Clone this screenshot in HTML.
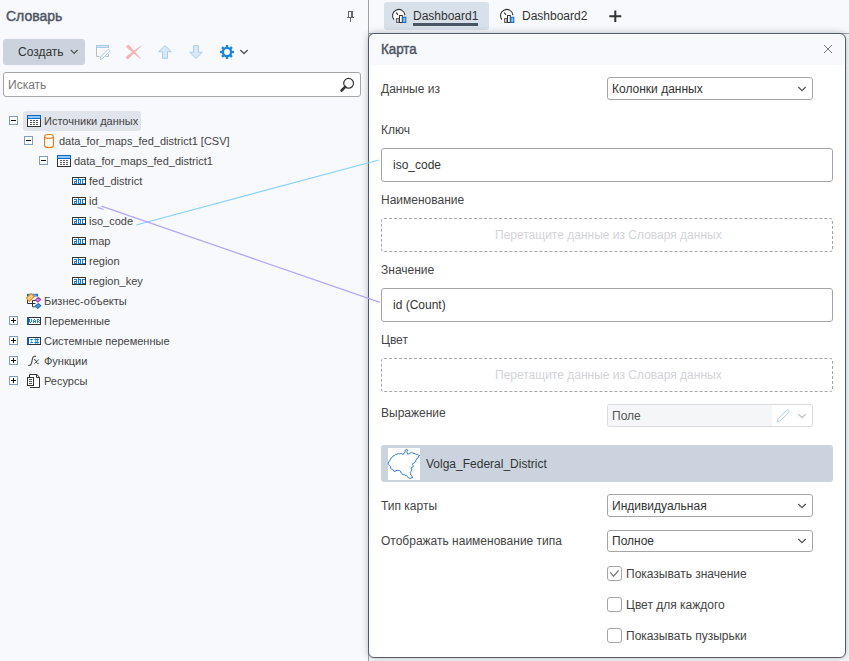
<!DOCTYPE html>
<html><head><meta charset="utf-8">
<style>
*{box-sizing:border-box;margin:0;padding:0}
html,body{width:849px;height:661px;overflow:hidden;background:#f8f9fc;font-family:"Liberation Sans",sans-serif;color:#444}
.t{position:absolute;white-space:nowrap;line-height:1;font-size:12px}
.s11{font-size:11px}
.b13{font-size:14px;font-weight:normal;-webkit-text-stroke:0.45px currentColor;transform:scaleX(0.955);transform-origin:0 0}
.abs{position:absolute}
svg{position:absolute;overflow:visible}
</style></head><body>

<!-- ===== LEFT PANEL ===== -->
<div class="t b13" style="left:6px;top:9px;color:#4e5563;transform:none">Словарь</div>

<!-- pin -->

<!-- Create button -->
<div class="abs" style="left:3px;top:39px;width:82px;height:26px;background:#cbd3de;border-radius:3px"></div>
<div class="t" style="left:18px;top:46px;color:#333">Создать</div>

<!-- search -->
<div class="abs" style="left:3px;top:72px;width:358px;height:25px;background:#fff;border:1px solid #a6a6a6;border-radius:3px"></div>
<div class="t" style="left:8px;top:79px;color:#777">Искать</div>

<!-- tree highlight -->
<div class="abs" style="left:23px;top:111px;width:118px;height:20px;background:#e1e4ea;border-radius:3px"></div>

<div class="t s11" style="left:44px;top:116px">Источники данных</div>
<div class="t s11" style="left:59px;top:136px">data_for_maps_fed_district1 [CSV]</div>
<div class="t s11" style="left:74px;top:156px">data_for_maps_fed_district1</div>
<div class="t s11" style="left:89px;top:176px">fed_district</div>
<div class="t s11" style="left:89px;top:196px">id</div>
<div class="t s11" style="left:89px;top:216px">iso_code</div>
<div class="t s11" style="left:89px;top:236px">map</div>
<div class="t s11" style="left:89px;top:256px">region</div>
<div class="t s11" style="left:89px;top:276px">region_key</div>
<div class="t s11" style="left:44px;top:296px">Бизнес-объекты</div>
<div class="t s11" style="left:44px;top:316px">Переменные</div>
<div class="t s11" style="left:44px;top:336px">Системные переменные</div>
<div class="t s11" style="left:44px;top:356px">Функции</div>
<div class="t s11" style="left:44px;top:376px">Ресурсы</div>

<!-- left panel border -->
<div class="abs" style="left:368px;top:0;width:1px;height:661px;background:#a0a0a0"></div>

<!-- ===== TABS ===== -->
<div class="abs" style="left:384px;top:2px;width:105px;height:28px;background:#d8e0ea;border-radius:3px"></div>
<div class="t" style="left:413px;top:10px;color:#333">Dashboard1</div>
<div class="abs" style="left:413px;top:23px;width:65px;height:3px;background:#4a5566"></div>
<div class="t" style="left:522px;top:10px;color:#333">Dashboard2</div>
<div class="abs" style="left:369px;top:33px;width:480px;height:1px;background:#a0a0a0"></div>

<!-- ===== PANEL ===== -->
<div class="abs" style="left:368px;top:33px;width:478px;height:625px;background:#fff;border:1px solid #4f5b6e;border-radius:6px;box-shadow:0 0 7px rgba(0,0,0,0.26);overflow:hidden">
  <div class="abs" style="left:1px;top:1px;width:474px;height:30px;background:#f8f9fc;border-radius:5px 5px 0 0"></div>
</div>

<div class="t b13" style="left:381px;top:42px;color:#4e5563">Карта</div>
<div class="t" style="left:381px;top:83px">Данные из</div>
<div class="abs" style="left:607px;top:77px;width:206px;height:23px;border:1px solid #a6a6a6;border-radius:3px;background:#fff"></div>
<div class="t" style="left:612px;top:83px;color:#333">Колонки данных</div>

<div class="t" style="left:381px;top:124px">Ключ</div>
<div class="abs" style="left:381px;top:148px;width:452px;height:34px;border:1px solid #a6a6a6;border-radius:3px;background:#fff"></div>
<div class="t" style="left:393px;top:159px;color:#333">iso_code</div>

<div class="t" style="left:381px;top:194px">Наименование</div>
<div class="abs" style="left:381px;top:218px;width:452px;height:34px;border:1px dashed #a6a6a6;border-radius:3px"></div>
<div class="t" style="left:495px;top:229px;color:#d3d3da">Перетащите данные из Словаря данных</div>

<div class="t" style="left:381px;top:264px">Значение</div>
<div class="abs" style="left:381px;top:288px;width:452px;height:34px;border:1px solid #a6a6a6;border-radius:3px;background:#fff"></div>
<div class="t" style="left:393px;top:299px;color:#333">id (Count)</div>

<div class="t" style="left:381px;top:334px">Цвет</div>
<div class="abs" style="left:381px;top:358px;width:452px;height:34px;border:1px dashed #a6a6a6;border-radius:3px"></div>
<div class="t" style="left:495px;top:369px;color:#d3d3da">Перетащите данные из Словаря данных</div>

<div class="t" style="left:381px;top:407px">Выражение</div>
<div class="abs" style="left:607px;top:404px;width:206px;height:23px;border:1px solid #dadada;border-radius:3px;background:#fff;overflow:hidden">
  <div class="abs" style="left:0;top:0;width:164px;height:21px;background:#f4f6f8"></div>
</div>
<div class="t" style="left:612px;top:410px;color:#555">Поле</div>

<div class="abs" style="left:381px;top:445px;width:452px;height:37px;background:#cbd3df;border-radius:3px"></div>
<div class="abs" style="left:388px;top:448px;width:32px;height:32px;background:#fff"></div>
<div class="t" style="left:426px;top:458px;color:#333">Volga_Federal_District</div>

<div class="t" style="left:381px;top:500px">Тип карты</div>
<div class="abs" style="left:607px;top:494px;width:206px;height:23px;border:1px solid #a6a6a6;border-radius:3px;background:#fff"></div>
<div class="t" style="left:612px;top:500px;color:#333">Индивидуальная</div>

<div class="t" style="left:381px;top:535px">Отображать наименование типа</div>
<div class="abs" style="left:607px;top:530px;width:206px;height:22px;border:1px solid #a6a6a6;border-radius:3px;background:#fff"></div>
<div class="t" style="left:612px;top:535px;color:#333">Полное</div>

<div class="abs" style="left:607px;top:566px;width:15px;height:15px;border:1px solid #a6a6a6;border-radius:3px;background:#fff"></div>
<div class="t" style="left:626px;top:568px">Показывать значение</div>
<div class="abs" style="left:607px;top:597px;width:15px;height:15px;border:1px solid #a6a6a6;border-radius:3px;background:#fff"></div>
<div class="t" style="left:626px;top:599px">Цвет для каждого</div>
<div class="abs" style="left:607px;top:628px;width:15px;height:15px;border:1px solid #a6a6a6;border-radius:3px;background:#fff"></div>
<div class="t" style="left:626px;top:630px">Показывать пузырьки</div>

<svg style="left:0;top:0" width="849" height="661"><g fill="#666"><rect x="348" y="11" width="1" height="6"/><rect x="348" y="11" width="5" height="1"/><rect x="351" y="11" width="2" height="6"/><rect x="347" y="17" width="7" height="1"/><rect x="350" y="18" width="1" height="4"/></g><path d="M70.8 50 L74.2 53.4 L77.6 50" fill="none" stroke="#555" stroke-width="1.3"/><path d="M96.5 48 V56.5 H99.5 M105.5 56.5 H108.5 V54" fill="none" stroke="#bcbcbc" stroke-width="1"/><rect x="96.5" y="45.5" width="12" height="2" fill="#d3e6f6" stroke="#a9cde9" stroke-width="1"/><path d="M100 59.3 L102.4 58.6 L109.45 51.45 A1.2 1.2 0 0 0 107.75 49.75 L100.7 56.9 Z" fill="#fff" stroke="#a9cde9" stroke-width="1"/><path d="M126.89 47.65 L140.22 58.79 L140.78 58.21 L129.11 45.35Z M128.47 58.64 L141.26 46.30 L140.74 45.70 L126.53 56.36Z" fill="#f5b3b7"/><circle cx="128" cy="46.5" r="1.6" fill="#f5b3b7"/><circle cx="127.5" cy="57.5" r="1.5" fill="#f5b3b7"/><path d="M165 45.5 L171.3 51.7 H167.5 V58.3 H162.5 V51.7 H158.7 Z" fill="#d9e8f7" stroke="#a9cde9" stroke-width="1"/><path d="M196 58.5 L202.3 52.3 H198.5 V45.7 H193.5 V52.3 H189.7 Z" fill="#d9e8f7" stroke="#a9cde9" stroke-width="1"/><g transform="translate(227 52)" fill="#1d84d6"><rect x="-1.2" y="-7" width="2.4" height="3" transform="rotate(0)"/><rect x="-1.2" y="-7" width="2.4" height="3" transform="rotate(45)"/><rect x="-1.2" y="-7" width="2.4" height="3" transform="rotate(90)"/><rect x="-1.2" y="-7" width="2.4" height="3" transform="rotate(135)"/><rect x="-1.2" y="-7" width="2.4" height="3" transform="rotate(180)"/><rect x="-1.2" y="-7" width="2.4" height="3" transform="rotate(225)"/><rect x="-1.2" y="-7" width="2.4" height="3" transform="rotate(270)"/><rect x="-1.2" y="-7" width="2.4" height="3" transform="rotate(315)"/><circle r="4.1" fill="none" stroke="#1d84d6" stroke-width="2.3"/></g><path d="M240.3 50 L244 53.6 L247.7 50" fill="none" stroke="#555" stroke-width="1.4"/><circle cx="348.6" cy="83.3" r="4.9" fill="none" stroke="#333" stroke-width="1.2"/><path d="M345.2 86.8 L341.6 90.5" stroke="#333" stroke-width="2.6" stroke-linecap="round"/><rect x="9.5" y="116.5" width="8" height="8" fill="#fff" stroke="#7e9fc2"/><rect x="11" y="120" width="5" height="1" fill="#111"/><rect x="24.5" y="136.5" width="8" height="8" fill="#fff" stroke="#7e9fc2"/><rect x="26" y="140" width="5" height="1" fill="#111"/><rect x="39.5" y="156.5" width="8" height="8" fill="#fff" stroke="#7e9fc2"/><rect x="41" y="160" width="5" height="1" fill="#111"/><rect x="9.5" y="316.5" width="8" height="8" fill="#fff" stroke="#7e9fc2"/><rect x="11" y="320" width="5" height="1" fill="#111"/><rect x="13" y="318" width="1" height="5" fill="#111"/><rect x="9.5" y="336.5" width="8" height="8" fill="#fff" stroke="#7e9fc2"/><rect x="11" y="340" width="5" height="1" fill="#111"/><rect x="13" y="338" width="1" height="5" fill="#111"/><rect x="9.5" y="356.5" width="8" height="8" fill="#fff" stroke="#7e9fc2"/><rect x="11" y="360" width="5" height="1" fill="#111"/><rect x="13" y="358" width="1" height="5" fill="#111"/><rect x="9.5" y="376.5" width="8" height="8" fill="#fff" stroke="#7e9fc2"/><rect x="11" y="380" width="5" height="1" fill="#111"/><rect x="13" y="378" width="1" height="5" fill="#111"/><g transform="translate(27 115)"><rect x="0.5" y="3.5" width="13" height="8" fill="#fff" stroke="#333" stroke-width="1"/><rect x="0" y="0" width="14" height="4" fill="#0a68c8"/><rect x="1" y="1" width="12" height="2" fill="#90c8f4"/><rect x="3" y="5" width="2" height="1" fill="#555"/><rect x="6" y="5" width="2" height="1" fill="#555"/><rect x="9" y="5" width="2" height="1" fill="#555"/><rect x="3" y="7" width="2" height="1" fill="#555"/><rect x="6" y="7" width="2" height="1" fill="#555"/><rect x="9" y="7" width="2" height="1" fill="#555"/><rect x="3" y="9" width="2" height="1" fill="#555"/><rect x="6" y="9" width="2" height="1" fill="#555"/><rect x="9" y="9" width="2" height="1" fill="#555"/></g><g fill="#fff" stroke="#e8730f" stroke-width="1.1"><path d="M44.6 136.5 V145.5 Q44.6 147.5 49 147.5 Q53.4 147.5 53.4 145.5 V136.5"/><ellipse cx="49" cy="136.4" rx="4.4" ry="1.9"/></g><g transform="translate(57 155)"><rect x="0.5" y="3.5" width="13" height="8" fill="#fff" stroke="#333" stroke-width="1"/><rect x="0" y="0" width="14" height="4" fill="#0a68c8"/><rect x="1" y="1" width="12" height="2" fill="#90c8f4"/><rect x="3" y="5" width="2" height="1" fill="#555"/><rect x="6" y="5" width="2" height="1" fill="#555"/><rect x="9" y="5" width="2" height="1" fill="#555"/><rect x="3" y="7" width="2" height="1" fill="#555"/><rect x="6" y="7" width="2" height="1" fill="#555"/><rect x="9" y="7" width="2" height="1" fill="#555"/><rect x="3" y="9" width="2" height="1" fill="#555"/><rect x="6" y="9" width="2" height="1" fill="#555"/><rect x="9" y="9" width="2" height="1" fill="#555"/></g><g transform="translate(72 177)"><rect x="0.5" y="0.5" width="13" height="7" fill="#fff" stroke="#333"/><g fill="#1a7fd0"><rect x="2" y="2" width="1" height="1"/><rect x="3" y="2" width="1" height="1"/><rect x="4" y="2" width="1" height="1"/><rect x="4" y="3" width="1" height="1"/><rect x="2" y="4" width="1" height="1"/><rect x="3" y="4" width="1" height="1"/><rect x="4" y="4" width="1" height="1"/><rect x="2" y="5" width="1" height="1"/><rect x="4" y="5" width="1" height="1"/><rect x="2" y="6" width="1" height="1"/><rect x="3" y="6" width="1" height="1"/><rect x="4" y="6" width="1" height="1"/><rect x="6" y="1" width="1" height="1"/><rect x="6" y="2" width="1" height="1"/><rect x="7" y="2" width="1" height="1"/><rect x="8" y="2" width="1" height="1"/><rect x="6" y="3" width="1" height="1"/><rect x="8" y="3" width="1" height="1"/><rect x="6" y="4" width="1" height="1"/><rect x="8" y="4" width="1" height="1"/><rect x="6" y="5" width="1" height="1"/><rect x="8" y="5" width="1" height="1"/><rect x="6" y="6" width="1" height="1"/><rect x="7" y="6" width="1" height="1"/><rect x="8" y="6" width="1" height="1"/><rect x="10" y="2" width="1" height="1"/><rect x="11" y="2" width="1" height="1"/><rect x="12" y="2" width="1" height="1"/><rect x="10" y="3" width="1" height="1"/><rect x="10" y="4" width="1" height="1"/><rect x="10" y="5" width="1" height="1"/><rect x="10" y="6" width="1" height="1"/><rect x="11" y="6" width="1" height="1"/><rect x="12" y="6" width="1" height="1"/></g></g><g transform="translate(72 197)"><rect x="0.5" y="0.5" width="13" height="7" fill="#fff" stroke="#333"/><g fill="#1a7fd0"><rect x="2" y="2" width="1" height="1"/><rect x="3" y="2" width="1" height="1"/><rect x="4" y="2" width="1" height="1"/><rect x="4" y="3" width="1" height="1"/><rect x="2" y="4" width="1" height="1"/><rect x="3" y="4" width="1" height="1"/><rect x="4" y="4" width="1" height="1"/><rect x="2" y="5" width="1" height="1"/><rect x="4" y="5" width="1" height="1"/><rect x="2" y="6" width="1" height="1"/><rect x="3" y="6" width="1" height="1"/><rect x="4" y="6" width="1" height="1"/><rect x="6" y="1" width="1" height="1"/><rect x="6" y="2" width="1" height="1"/><rect x="7" y="2" width="1" height="1"/><rect x="8" y="2" width="1" height="1"/><rect x="6" y="3" width="1" height="1"/><rect x="8" y="3" width="1" height="1"/><rect x="6" y="4" width="1" height="1"/><rect x="8" y="4" width="1" height="1"/><rect x="6" y="5" width="1" height="1"/><rect x="8" y="5" width="1" height="1"/><rect x="6" y="6" width="1" height="1"/><rect x="7" y="6" width="1" height="1"/><rect x="8" y="6" width="1" height="1"/><rect x="10" y="2" width="1" height="1"/><rect x="11" y="2" width="1" height="1"/><rect x="12" y="2" width="1" height="1"/><rect x="10" y="3" width="1" height="1"/><rect x="10" y="4" width="1" height="1"/><rect x="10" y="5" width="1" height="1"/><rect x="10" y="6" width="1" height="1"/><rect x="11" y="6" width="1" height="1"/><rect x="12" y="6" width="1" height="1"/></g></g><g transform="translate(72 217)"><rect x="0.5" y="0.5" width="13" height="7" fill="#fff" stroke="#333"/><g fill="#1a7fd0"><rect x="2" y="2" width="1" height="1"/><rect x="3" y="2" width="1" height="1"/><rect x="4" y="2" width="1" height="1"/><rect x="4" y="3" width="1" height="1"/><rect x="2" y="4" width="1" height="1"/><rect x="3" y="4" width="1" height="1"/><rect x="4" y="4" width="1" height="1"/><rect x="2" y="5" width="1" height="1"/><rect x="4" y="5" width="1" height="1"/><rect x="2" y="6" width="1" height="1"/><rect x="3" y="6" width="1" height="1"/><rect x="4" y="6" width="1" height="1"/><rect x="6" y="1" width="1" height="1"/><rect x="6" y="2" width="1" height="1"/><rect x="7" y="2" width="1" height="1"/><rect x="8" y="2" width="1" height="1"/><rect x="6" y="3" width="1" height="1"/><rect x="8" y="3" width="1" height="1"/><rect x="6" y="4" width="1" height="1"/><rect x="8" y="4" width="1" height="1"/><rect x="6" y="5" width="1" height="1"/><rect x="8" y="5" width="1" height="1"/><rect x="6" y="6" width="1" height="1"/><rect x="7" y="6" width="1" height="1"/><rect x="8" y="6" width="1" height="1"/><rect x="10" y="2" width="1" height="1"/><rect x="11" y="2" width="1" height="1"/><rect x="12" y="2" width="1" height="1"/><rect x="10" y="3" width="1" height="1"/><rect x="10" y="4" width="1" height="1"/><rect x="10" y="5" width="1" height="1"/><rect x="10" y="6" width="1" height="1"/><rect x="11" y="6" width="1" height="1"/><rect x="12" y="6" width="1" height="1"/></g></g><g transform="translate(72 237)"><rect x="0.5" y="0.5" width="13" height="7" fill="#fff" stroke="#333"/><g fill="#1a7fd0"><rect x="2" y="2" width="1" height="1"/><rect x="3" y="2" width="1" height="1"/><rect x="4" y="2" width="1" height="1"/><rect x="4" y="3" width="1" height="1"/><rect x="2" y="4" width="1" height="1"/><rect x="3" y="4" width="1" height="1"/><rect x="4" y="4" width="1" height="1"/><rect x="2" y="5" width="1" height="1"/><rect x="4" y="5" width="1" height="1"/><rect x="2" y="6" width="1" height="1"/><rect x="3" y="6" width="1" height="1"/><rect x="4" y="6" width="1" height="1"/><rect x="6" y="1" width="1" height="1"/><rect x="6" y="2" width="1" height="1"/><rect x="7" y="2" width="1" height="1"/><rect x="8" y="2" width="1" height="1"/><rect x="6" y="3" width="1" height="1"/><rect x="8" y="3" width="1" height="1"/><rect x="6" y="4" width="1" height="1"/><rect x="8" y="4" width="1" height="1"/><rect x="6" y="5" width="1" height="1"/><rect x="8" y="5" width="1" height="1"/><rect x="6" y="6" width="1" height="1"/><rect x="7" y="6" width="1" height="1"/><rect x="8" y="6" width="1" height="1"/><rect x="10" y="2" width="1" height="1"/><rect x="11" y="2" width="1" height="1"/><rect x="12" y="2" width="1" height="1"/><rect x="10" y="3" width="1" height="1"/><rect x="10" y="4" width="1" height="1"/><rect x="10" y="5" width="1" height="1"/><rect x="10" y="6" width="1" height="1"/><rect x="11" y="6" width="1" height="1"/><rect x="12" y="6" width="1" height="1"/></g></g><g transform="translate(72 257)"><rect x="0.5" y="0.5" width="13" height="7" fill="#fff" stroke="#333"/><g fill="#1a7fd0"><rect x="2" y="2" width="1" height="1"/><rect x="3" y="2" width="1" height="1"/><rect x="4" y="2" width="1" height="1"/><rect x="4" y="3" width="1" height="1"/><rect x="2" y="4" width="1" height="1"/><rect x="3" y="4" width="1" height="1"/><rect x="4" y="4" width="1" height="1"/><rect x="2" y="5" width="1" height="1"/><rect x="4" y="5" width="1" height="1"/><rect x="2" y="6" width="1" height="1"/><rect x="3" y="6" width="1" height="1"/><rect x="4" y="6" width="1" height="1"/><rect x="6" y="1" width="1" height="1"/><rect x="6" y="2" width="1" height="1"/><rect x="7" y="2" width="1" height="1"/><rect x="8" y="2" width="1" height="1"/><rect x="6" y="3" width="1" height="1"/><rect x="8" y="3" width="1" height="1"/><rect x="6" y="4" width="1" height="1"/><rect x="8" y="4" width="1" height="1"/><rect x="6" y="5" width="1" height="1"/><rect x="8" y="5" width="1" height="1"/><rect x="6" y="6" width="1" height="1"/><rect x="7" y="6" width="1" height="1"/><rect x="8" y="6" width="1" height="1"/><rect x="10" y="2" width="1" height="1"/><rect x="11" y="2" width="1" height="1"/><rect x="12" y="2" width="1" height="1"/><rect x="10" y="3" width="1" height="1"/><rect x="10" y="4" width="1" height="1"/><rect x="10" y="5" width="1" height="1"/><rect x="10" y="6" width="1" height="1"/><rect x="11" y="6" width="1" height="1"/><rect x="12" y="6" width="1" height="1"/></g></g><g transform="translate(72 277)"><rect x="0.5" y="0.5" width="13" height="7" fill="#fff" stroke="#333"/><g fill="#1a7fd0"><rect x="2" y="2" width="1" height="1"/><rect x="3" y="2" width="1" height="1"/><rect x="4" y="2" width="1" height="1"/><rect x="4" y="3" width="1" height="1"/><rect x="2" y="4" width="1" height="1"/><rect x="3" y="4" width="1" height="1"/><rect x="4" y="4" width="1" height="1"/><rect x="2" y="5" width="1" height="1"/><rect x="4" y="5" width="1" height="1"/><rect x="2" y="6" width="1" height="1"/><rect x="3" y="6" width="1" height="1"/><rect x="4" y="6" width="1" height="1"/><rect x="6" y="1" width="1" height="1"/><rect x="6" y="2" width="1" height="1"/><rect x="7" y="2" width="1" height="1"/><rect x="8" y="2" width="1" height="1"/><rect x="6" y="3" width="1" height="1"/><rect x="8" y="3" width="1" height="1"/><rect x="6" y="4" width="1" height="1"/><rect x="8" y="4" width="1" height="1"/><rect x="6" y="5" width="1" height="1"/><rect x="8" y="5" width="1" height="1"/><rect x="6" y="6" width="1" height="1"/><rect x="7" y="6" width="1" height="1"/><rect x="8" y="6" width="1" height="1"/><rect x="10" y="2" width="1" height="1"/><rect x="11" y="2" width="1" height="1"/><rect x="12" y="2" width="1" height="1"/><rect x="10" y="3" width="1" height="1"/><rect x="10" y="4" width="1" height="1"/><rect x="10" y="5" width="1" height="1"/><rect x="10" y="6" width="1" height="1"/><rect x="11" y="6" width="1" height="1"/><rect x="12" y="6" width="1" height="1"/></g></g><g><rect x="27" y="293.8" width="11" height="2.7" fill="#0a68c8"/><rect x="28.5" y="294.6" width="8" height="1.1" fill="#90c8f4"/><path d="M27.5 299.5 V303.5 H35.5 M32.5 300.5 V306.8 H35.5 M32.5 300.5 H36" fill="none" stroke="#333" stroke-width="1"/><path d="M31.1 293.6 L34 296.6 L29.4 301.4 L26.4 298.2 Z" fill="#f7d08a" stroke="#f08c14" stroke-width="1.1" stroke-linejoin="round"/><path d="M38.3 297.4 L40.7 299.6 L37.9 302 L35.5 299.9 Z" fill="#cf8ee0" stroke="#9c3db4" stroke-width="1.1"/><path d="M38.4 303.6 L40.7 305.7 L37.7 308.3 L35.3 306.1 Z" fill="#4d9de2" stroke="#1a6cc0" stroke-width="1.1"/></g><g transform="translate(27 317)"><rect x="1.5" y="0.5" width="12" height="7" fill="#fff" stroke="#333"/><rect x="0" y="0" width="2" height="8" fill="#0a5cc0"/><g fill="#2a86d4"><rect x="2" y="2" width="1" height="1"/><rect x="4" y="2" width="1" height="1"/><rect x="2" y="3" width="1" height="1"/><rect x="4" y="3" width="1" height="1"/><rect x="2" y="4" width="1" height="1"/><rect x="4" y="4" width="1" height="1"/><rect x="3" y="5" width="1" height="1"/><rect x="7" y="2" width="1" height="1"/><rect x="6" y="3" width="1" height="1"/><rect x="8" y="3" width="1" height="1"/><rect x="6" y="4" width="1" height="1"/><rect x="7" y="4" width="1" height="1"/><rect x="8" y="4" width="1" height="1"/><rect x="6" y="5" width="1" height="1"/><rect x="8" y="5" width="1" height="1"/><rect x="10" y="2" width="1" height="1"/><rect x="11" y="2" width="1" height="1"/><rect x="10" y="3" width="1" height="1"/><rect x="12" y="3" width="1" height="1"/><rect x="10" y="4" width="1" height="1"/><rect x="11" y="4" width="1" height="1"/><rect x="10" y="5" width="1" height="1"/><rect x="12" y="5" width="1" height="1"/></g></g><g transform="translate(27 337)"><rect x="1.5" y="0.5" width="12" height="7" fill="#fff" stroke="#333"/><rect x="0" y="0" width="2" height="8" fill="#0a5cc0"/><g fill="#1a7fd0"><rect x="3.3" y="2" width="2.6" height="1"/><rect x="3.3" y="5" width="2.6" height="1"/><rect x="3.9" y="3" width="1.2" height="2" fill="#8cc0ec"/><rect x="7.3" y="2" width="4.6" height="1"/><rect x="7.3" y="5" width="4.6" height="1"/><rect x="8.3" y="1.2" width="1" height="5.6"/><rect x="10.2" y="1.2" width="1" height="5.6"/></g></g><g fill="none" stroke="#444" stroke-width="1.1"><path d="M36 356.4 Q33.2 355.6 32.5 358.5 L31.5 363.4 Q31 365.8 28.2 365.5"/><path d="M34 359.6 Q35.4 359.1 36.1 361 L36.8 362.9 Q37.3 364 38.7 363.3" stroke-width="1"/><path d="M34.3 363.8 L38.9 359.5" stroke-width="0.9"/></g><g fill="#fff" stroke="#333" stroke-width="1"><path d="M29.5 377 V374.5 H36.8 L39.5 377.2 V387.5 H30"/><path d="M36.5 374.8 V377.5 H39.3" fill="none"/><rect x="27.5" y="377.5" width="6" height="8"/></g><g fill="#555"><rect x="29" y="379" width="3" height="1"/><rect x="29" y="381" width="3" height="1"/><rect x="29" y="383" width="3" height="1"/></g><g transform="translate(0 0)"><path d="M393.95 19.6 A6.2 6.2 0 1 1 404.9 15.1" fill="#fff" stroke="#333" stroke-width="1.1"/><path d="M396.2 12.6 L398 14.8" stroke="#333" stroke-width="1.1"/><rect x="396.5" y="18.5" width="2.6" height="4" fill="#ccc" stroke="#666" stroke-width="1"/><rect x="399.5" y="15.5" width="2.8" height="7" fill="#fff" stroke="#333" stroke-width="1"/><rect x="402.8" y="17.3" width="3" height="5.2" fill="#8cc4f0" stroke="#0a68c8" stroke-width="1"/></g><g transform="translate(108 0)"><path d="M393.95 19.6 A6.2 6.2 0 1 1 404.9 15.1" fill="#fff" stroke="#333" stroke-width="1.1"/><path d="M396.2 12.6 L398 14.8" stroke="#333" stroke-width="1.1"/><rect x="396.5" y="18.5" width="2.6" height="4" fill="#ccc" stroke="#666" stroke-width="1"/><rect x="399.5" y="15.5" width="2.8" height="7" fill="#fff" stroke="#333" stroke-width="1"/><rect x="402.8" y="17.3" width="3" height="5.2" fill="#8cc4f0" stroke="#0a68c8" stroke-width="1"/></g><path d="M609.3 16.3 H621.3 M615.3 10.5 V22" stroke="#333" stroke-width="2"/><path d="M824 45 L832 53 M832 45 L824 53" stroke="#6e6e6e" stroke-width="0.95"/><path d="M798.3 87 L802 90.6 L805.7 87" fill="none" stroke="#555" stroke-width="1.3"/><path d="M798.3 504 L802 507.6 L805.7 504" fill="none" stroke="#555" stroke-width="1.3"/><path d="M798.3 539 L802 542.6 L805.7 539" fill="none" stroke="#555" stroke-width="1.3"/><path transform="translate(0.3 1)" d="M776.8 420.8 L780.15 419.6 L788.2 411.7 A1.5 1.5 0 0 0 786.1 409.5 L778 417.4 Z" fill="#fff" stroke="#a9d0ee" stroke-width="1"/><path d="M798.3 414.2 L802 417.6 L805.7 414.2" fill="none" stroke="#c4c4c4" stroke-width="1.3"/><path d="M388.3 463.5 L388.7 461.9 L389.8 460.7 L390.4 459.2 L391.2 458.0 L392.4 457.1 L393.2 455.9 L394.5 455.5 L395.5 454.4 L397.0 454.3 L398.1 453.4 L399.6 454.1 L400.8 453.4 L401.5 453.4 L402.0 453.7 L402.4 454.3 L403.5 454.2 L403.8 453.1 L404.6 452.6 L405.2 451.9 L405.0 451.0 L405.2 450.2 L405.9 450.1 L406.3 449.3 L407.1 449.4 L407.2 449.9 L407.3 450.4 L407.9 450.5 L407.5 451.0 L406.9 451.4 L406.8 452.1 L406.8 452.8 L407.6 453.2 L407.3 454.0 L408.3 454.0 L409.2 453.6 L410.1 453.2 L410.7 452.8 L411.3 452.3 L412.2 452.6 L413.0 453.4 L414.1 453.3 L415.0 453.7 L415.8 454.2 L416.7 454.5 L417.7 454.3 L418.2 454.9 L418.7 455.5 L419.6 455.4 L419.2 456.2 L418.4 456.6 L418.2 457.5 L417.7 458.3 L416.7 458.6 L416.6 459.7 L415.7 460.2 L415.9 461.4 L415.0 461.9 L414.5 462.8 L413.7 463.2 L412.8 463.5 L412.4 464.7 L413.2 465.7 L413.3 466.8 L412.5 467.0 L412.0 467.7 L411.1 467.9 L411.3 468.6 L411.6 469.3 L411.7 470.1 L411.3 471.1 L410.6 471.8 L410.1 472.8 L410.5 473.7 L410.7 474.8 L411.7 475.5 L411.9 476.3 L412.0 477.2 L412.8 477.7 L411.7 477.7 L410.8 477.9 L410.1 478.8 L409.5 478.1 L408.4 478.0 L407.9 477.1 L407.2 476.2 L406.4 475.6 L405.2 475.5 L404.5 474.7 L403.4 474.7 L402.4 474.4 L401.9 473.2 L400.7 472.4 L400.3 471.1 L399.3 470.4 L398.1 470.4 L397.0 470.1 L396.0 470.7 L395.0 471.3 L393.7 471.1 L393.3 470.1 L392.7 469.3 L391.5 469.0 L390.5 468.3 L390.8 467.0 L389.9 466.2 L389.3 465.4 L388.5 464.6Z" fill="#fff" stroke="#2f78cc" stroke-width="1"/><path d="M610.3 572.4 L613.5 576.2 L618.6 570.4" fill="none" stroke="#777" stroke-width="1.3"/><path d="M136.2 225 L378.8 160" stroke="#86d2f8" stroke-width="1.25"/><path d="M101.4 206.2 L380 302.3" stroke="#b3a5f8" stroke-width="1.25"/><path d="M97.7 207.4 L103.5 209.5" stroke="#ad9ef8" stroke-width="1.2"/></svg>
</body></html>
